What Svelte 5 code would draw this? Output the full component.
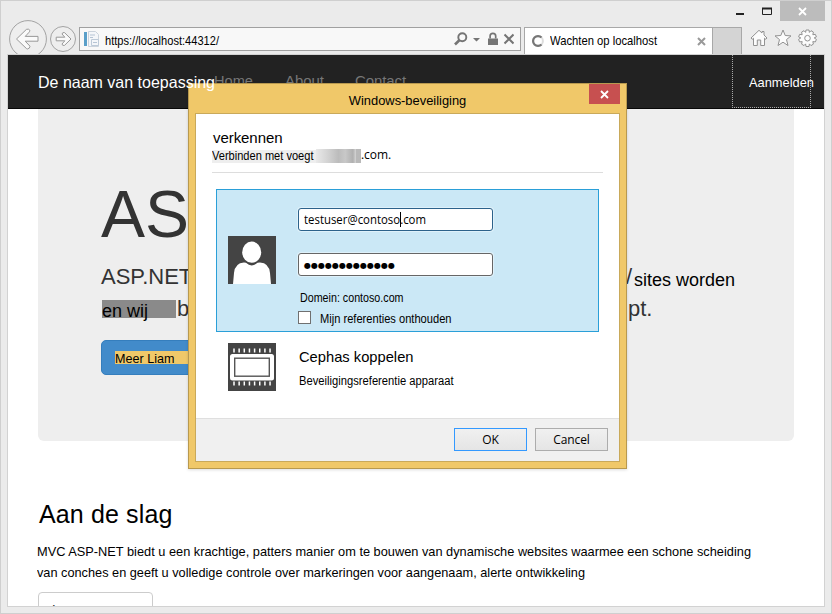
<script>
  // Condenses or tracks a line of text so that it spans the given width in pixels.
  function span(node, width) {
    const range = document.createRange();
    range.selectNodeContents(node);
    const natural = range.getBoundingClientRect().width;
    if (natural > width + 1) {
      node.style.display = 'inline-block';
      node.style.transform = `scaleX(${width / natural})`;
    } else {
      node.style.letterSpacing = `${(width - natural) / node.textContent.length}px`;
    }
  }
  const teeth = [0, 1, 2, 3, 4, 5, 6, 7];
</script>

<div class="window">
  <header class="chrome">
    <div class="controls">
      <svg width="50" height="20" viewBox="0 0 50 20"><path d="M5 13H13" stroke="#222" stroke-width="2"/><path d="M31.5 7.500h9v6h-9z" fill="none" stroke="#222"/><path d="M31 7.500h10" stroke="#222" stroke-width="2"/></svg>
      <div class="winclose"><svg width="9" height="9" viewBox="0 0 9 9"><path d="M1 1l7 7M8 1L1 8" stroke="#fff" stroke-width="1.8"/></svg></div>
    </div>
    <div class="toolbar">
      <svg class="back" width="40" height="40" viewBox="0 0 40 40"><circle cx="20" cy="20" r="18.4" fill="#eee" stroke="#a3a3a3"/><path d="M8.5 20L18.4 10.4Q20.5 9.3 22 11.5Q22 12.6 17.2 17.4H30V22.2H17.2L22 27.2Q22 29.5 19.4 30L18.4 29.5Z" fill="#fafafa" stroke="#999" stroke-linejoin="round"/></svg>
      <svg class="forward" width="28" height="28" viewBox="0 0 28 28"><circle cx="14" cy="14" r="12.5" fill="#eee" stroke="#a3a3a3"/><path d="M22 14L15.5 7.6Q13.5 7 13 9L15.8 12.2H7.2V15.8H15.8L13 19Q13.3 21 15.5 20.4Z" fill="#fafafa" stroke="#999" stroke-linejoin="round"/></svg>
      <div class="address">
        <svg width="17" height="17" viewBox="0 0 17 17"><path d="M1 1h3v14H1z" fill="#5a9fc9"/><path d="M5.5.5h7l3 3v12h-10z" fill="#f4f6f9" stroke="#cbd3dc"/><path d="M7 4h5M7 6.5h3" stroke="#b6c4d4"/><path d="M8.500 8.500h7v6h-7z" fill="#f4f6f9" stroke="#bdcad8"/><path d="M10 11.500h4" stroke="#b6c4d4"/></svg>
        <div class="url"><span use:span={114}>https://localhost:44312/</span></div>
        <svg class="tools" width="64" height="20" viewBox="0 0 64 20"><g fill="none" stroke="#757575"><circle cx="12.300" cy="8.200" r="4" stroke-width="1.900"/><path d="M9.300 11.300L5 15.500" stroke-width="2.600"/><path d="M40.100 9.500V7.100a2.800 2.800 0 0 1 5.600 0V9.500" stroke-width="1.700"/><path d="M54.500 5.500l9 9M63.500 5.500l-9 9" stroke-width="2"/></g><path d="M23 9h7l-3.500 3.600zM38 9.500h10v6.500h-10z" fill="#757575"/></svg>
      </div>
      <div class="tab">
        <svg class="spinner" width="14" height="14" viewBox="0 0 14 14"><circle cx="7" cy="7" r="4.900" fill="none" stroke="#ddd" stroke-width="2"/><path d="M10.500 3.600A4.900 4.900 0 1 0 10.500 10.400" fill="none" stroke="#777" stroke-width="2.200"/></svg>
        <div class="tabtext"><span use:span={107}>Wachten op localhost</span></div>
        <svg class="tabclose" width="9" height="9" viewBox="0 0 9 9"><path d="M1 1l7 7M8 1L1 8" stroke="#999" stroke-width="2"/></svg>
      </div>
      <div class="newtab"></div>
      <svg class="actions" width="68" height="18" viewBox="0 0 68 18"><g fill="#fcfcfc" stroke="#929292" stroke-linejoin="round"><path d="M1 9L9 1.300L12 4V2.500h2V6L17 9L15.800 10.300L14.500 9.200V16.500H10.700V11H7.300V16.500H3.500V9.200L2.200 10.300Z"/><path d="M33 1L35.200 6.500L41 6.900L36.500 10.600L38 16.500L33 13.200L28 16.500L29.500 10.600L25 6.900L30.800 6.500Z"/><path d="M56 1h3l.4 2.400 1.600-1.700 2.400 1.400-.6 2.600 2.600-.3 1 2.500-2.200 1 2.200 1.500-1 2.500-2.600-.3.6 2.500-2.400 1.500-1.600-1.700L59 17.500h-3l-.4-2.600-1.600 1.700-2.400-1.500.6-2.500-2.600.3-1-2.500 2.200-1.500-2.200-1 1-2.500 2.600.3-.6-2.600 2.400-1.400 1.600 1.700z"/><circle cx="57.500" cy="9.200" r="2.800"/></g></svg>
    </div>
  </header>

  <main>
    <nav>
      <div class="brand"><span use:span={177}>De naam van toepassing</span></div>
      <div class="link home"><span use:span={39}>Home</span></div>
      <div class="link about"><span use:span={39}>About</span></div>
      <div class="link contact"><span use:span={51}>Contact</span></div>
      <div class="login"><span use:span={65}>Aanmelden</span></div>
    </nav>
    <section class="jumbo">
      <h1>ASP.NET</h1>
      <div class="lead"><span>ASP.NET</span><span>/</span><span class="sub" use:span={101}>sites worden</span></div>
      <div class="lead second"><span class="mark">en wij</span><span>b</span><span class="tail">pt.</span></div>
      <div class="learn"><span><i use:span={59.5}>Meer Liam</i></span></div>
    </section>
    <section class="start">
      <h2><span use:span={133.5}>Aan de slag</span></h2>
      <p><span use:span={714}>MVC ASP-NET biedt u een krachtige, patters manier om te bouwen van dynamische websites waarmee een schone scheiding</span></p>
      <p><span use:span={548}>van conches en geeft u volledige controle over markeringen voor aangenaam, alerte ontwikkeling</span></p>
      <div class="more">Learn more</div>
    </section>
  </main>

  <div class="dialog">
    <div class="title"><span class="centered" use:span={117.500}>Windows-beveiliging</span>
      <div class="close"><svg width="9" height="9" viewBox="0 0 9 9"><path d="M1 1l7 7M8 1L1 8" stroke="#fff" stroke-width="1.800"/></svg></div>
    </div>
    <div class="body">
      <div class="intro">
        <div class="heading"><span use:span={69.500}>verkennen</span></div>
        <div class="connect"><span class="pale"><i use:span={101.500}>Verbinden met voegt</i></span><span class="redacted"></span><span class="com" use:span={30}>.com.</span></div>
      </div>
      <div class="credentials">
        <svg width="48" height="48" viewBox="0 0 48 48"><path fill="#444" d="M0 0h48v48H0z"/><path d="M5 48L6 37Q7 27 16 26.500L18 26.800Q23.700 32 29.500 26.800L32 26.500Q41 27 42 37L43 48Z" fill="#fff"/><ellipse cx="23.700" cy="16.300" rx="10.300" ry="11.800" fill="#444"/><ellipse cx="23.700" cy="16.200" rx="9.500" ry="10.600" fill="#fff"/></svg>
        <div class="fields">
          <div class="input user"><span use:span={122}>testuser@contoso.com</span><b></b></div>
          <div class="input pass"><span use:span={91}>●●●●●●●●●●●●●</span></div>
          <div class="domain"><span use:span={103.500}>Domein: contoso.com</span></div>
          <div class="remember"><div class="box"></div><span use:span={131.500}>Mijn referenties onthouden</span></div>
        </div>
      </div>
      <div class="device">
        <svg width="48" height="48" viewBox="0 0 48 48"><path fill="#444" d="M0 0h48v48H0z"/><rect x="2" y="11" width="44" height="26.500" rx="2.500" fill="#fff"/><rect x="6.700" y="15.200" width="34.600" height="18" fill="#fff" stroke="#555" stroke-width="1.400"/>{#each teeth as t}<path d="M{6 + t * 5.15} 5.500V9.500M{6 + t * 5.15} 38.500V42.500" stroke="#fff" stroke-width="1.500"/>{/each}</svg>
        <div>
          <div class="name"><span use:span={114.500}>Cephas koppelen</span></div>
          <div class="desc"><span use:span={154.500}>Beveiligingsreferentie apparaat</span></div>
        </div>
      </div>
      <div class="buttons"><div class="btn ok">OK</div><div class="btn"><span class="centered" use:span={36.500}>Cancel</span></div></div>
    </div>
  </div>
</div>

<style>
  * { box-sizing: border-box; }
  i { font-style: normal; }
  span, i { transform-origin: 0 50%; }
  .centered { transform-origin: 50% 50%; }
  svg { display: block; flex: none; }
  .window { position: relative; width: 832px; height: 614px; overflow: hidden; background: #ebebeb; border: 1px solid #cfcfcf; font-family: "Liberation Sans", Arial, sans-serif; color: #000; white-space: nowrap; }
  .chrome { height: 53px; overflow: hidden; }
  .controls { height: 20px; display: flex; justify-content: flex-end; padding-right: 6px; }
  .controls > svg { margin-right: -1px; }
  .winclose { width: 45px; height: 20px; background: #bcbcbc; display: flex; align-items: center; justify-content: center; }
  .toolbar { display: flex; height: 40px; padding-left: 7px; margin-top: -2px; align-items: flex-start; }
  .forward { margin: 6px 0 0 1px; }
  .address { margin: 8px 0 0 2px; width: 442px; height: 24px; border: 1px solid #a0a0a0; background: #f8f8f8; display: flex; align-items: center; padding-left: 3px; }
  .url { margin-left: 5px; font-size: 13px; line-height: 20px; width: 114px; padding-top: 3px; }
  .tools { margin-left: 231px; }
  .tab { margin: 8px 0 0 3px; width: 189px; height: 28px; border: 1px solid #a8a8a8; border-bottom: 0; background: #fff; display: flex; align-items: center; padding-left: 6px; }
  .spinner { margin-bottom: 1px; }
  .tabtext { font-size: 13px; width: 107px; margin-left: 5px; line-height: 20px; padding-bottom: 1px; }
  .tabclose { margin-left: 40px; }
  .newtab { margin-top: 8px; width: 29px; height: 28px; background: #d4d4d4; border: 1px solid #a8a8a8; border-left: 0; border-bottom: 0; }
  .actions { margin: 10px 0 0 8px; }
  main { margin-left: 6px; width: 818px; height: 553px; border: 1px solid #d2d2d2; background: #fff; overflow: hidden; }
  nav { height: 54px; background: #222; border-bottom: 1px solid #080808; display: flex; padding-left: 30px; }
  .brand { position: relative; z-index: 3; width: 176px; font-size: 16.5px; line-height: 55px; color: #fff; }
  .link { font-size: 15px; line-height: 52px; color: #777; }
  .home { width: 71px; }
  .about { width: 70px; }
  .contact { width: 377px; }
  .login { width: 79px; height: 53px; border: dotted #aaa; border-width: 0 1px 1px; padding-left: 16px; font-size: 13.5px; line-height: 55px; color: #fff; }
  .jumbo { margin-left: 30px; width: 756px; height: 332px; background: #eee; border-radius: 0 0 6px 6px; padding: 66px 0 0 63px; color: #333; }
  h1 { margin: 0; font-weight: 400; font-size: 66px; line-height: 79px; width: 400px; }
  .lead { display: grid; grid-template-columns: 525px 8px 110px; font-size: 22px; line-height: 32px; margin-top: 7px; }
  .sub { font-size: 18px; color: #000; line-height: 38px; height: 32px; }
  .second { grid-template-columns: 76px 451px 50px; margin-top: 0; height: 31px; align-items: start; }
  .mark { width: 74px; height: 18px; margin: 7px 0 0 1px; background: #8a8a8a; font-size: 18px; line-height: 22px; color: #000; }
  .second span:not(.mark) { line-height: 32px; }
  .learn { margin-top: 16px; width: 120px; height: 35px; border: 1px solid #357ebd; border-radius: 5px; background: #428bca; padding: 10px 0 0 13px; }
  .learn span { display: block; background: #f0c869; height: 13px; font-size: 13.5px; line-height: 15px; color: #000; }
  .start { padding: 0 0 0 30px; }
  h2 { margin: 58px 0 0; font-weight: 400; font-size: 25px; line-height: 30px; }
  h2 span { margin-left: 1px; }
  p { margin: 0 0 0 -1px; font-size: 13.5px; line-height: 21px; height: 21px; }
  h2 + p { margin-top: 12px; }
  .more { margin-top: 9px; width: 115px; height: 34px; border: 1px solid #ccc; border-radius: 4px; padding: 7px 13px; font-size: 14px; line-height: 20px; color: #333; }
  .dialog { position: absolute; z-index: 2; left: 187px; top: 82px; width: 439px; height: 386px; border: 1px solid #b8994f; background: #f0c869; box-shadow: 0 1px 3px #0002; padding: 0 6px; }
  .title { height: 29px; display: flex; justify-content: center; font-size: 13.5px; line-height: 33px; position: relative; }
  .close { position: absolute; right: 0; top: 0; width: 31px; height: 20px; background: #c75050; display: flex; align-items: center; justify-content: center; }
  .body { height: 349px; border: 1px solid #c9a95a; background: #fff; }
  .intro { margin: 0 16px; height: 59px; border-bottom: 1px solid #ddd; padding-top: 14px; }
  .heading { padding-left: 1px; font-size: 15px; line-height: 20px; }
  .connect { display: flex; font-size: 12.5px; line-height: 12px; padding-top: 2px; }
  .pale { background: #eee; width: 104px; height: 13px; }
  .redacted { width: 45px; height: 14px; margin-top: -1px; background: linear-gradient(90deg, #e9e9e9 0, #d4d4d4 25%, #bcbcbc 50%, #c8c8c8 65%, #b0b0b0 82%, #d0d0d0 88%, #b9b9b9 90%); }
  .com, .input, .btn { font-family: "Open Sans", "Noto Sans", sans-serif; }
  .com { font-size: 12px; line-height: 10px; }
  .credentials { margin: 16px 0 0 20px; width: 383px; height: 143px; border: 1px solid #2a9fd8; background: #cbe8f6; display: flex; padding-left: 11px; }
  .credentials > svg { margin-top: 46px; }
  .fields { padding: 18px 0 0 22px; }
  .input { width: 195px; height: 23px; background: #fff; border: 1px solid #666; border-radius: 3px; padding-left: 5px; font-size: 12px; line-height: 22px; box-shadow: 0 0 0 1px #dff1fa; }
  .user { border-color: #2c628b; position: relative; }
  .user b { position: absolute; left: 101px; top: 3px; width: 1px; height: 15px; background: #000; }
  .pass { margin-top: 22px; line-height: 20px; }
  .pass span { font-family: "DejaVu Sans", sans-serif; font-size: 8px; }
  .domain { padding: 14px 0 0 2px; font-size: 12.5px; line-height: 16px; height: 30px; }
  .remember { display: flex; font-size: 12.5px; line-height: 17px; height: 17px; margin-top: 5px; }
  .box { width: 13px; height: 13px; border: 1px solid #707070; background: #fff; margin-right: 9px; }
  .device { display: flex; margin: 11px 0 0 32px; height: 75px; }
  .device > div { margin-left: 23px; }
  .name { font-size: 15px; line-height: 28px; }
  .desc { font-size: 12.5px; line-height: 18px; margin-top: 1px; }
  .buttons { height: 43px; border-top: 1px solid #dfdfdf; background: #f0f0f0; display: flex; justify-content: flex-end; gap: 8px; padding: 9px 11px 0 0; }
  .btn { width: 73px; height: 23px; border: 1px solid #acacac; background: linear-gradient(#f0f0f0, #e5e5e5); text-align: center; font-size: 12px; line-height: 22px; }
  .ok { border-color: #39f; }
</style>
